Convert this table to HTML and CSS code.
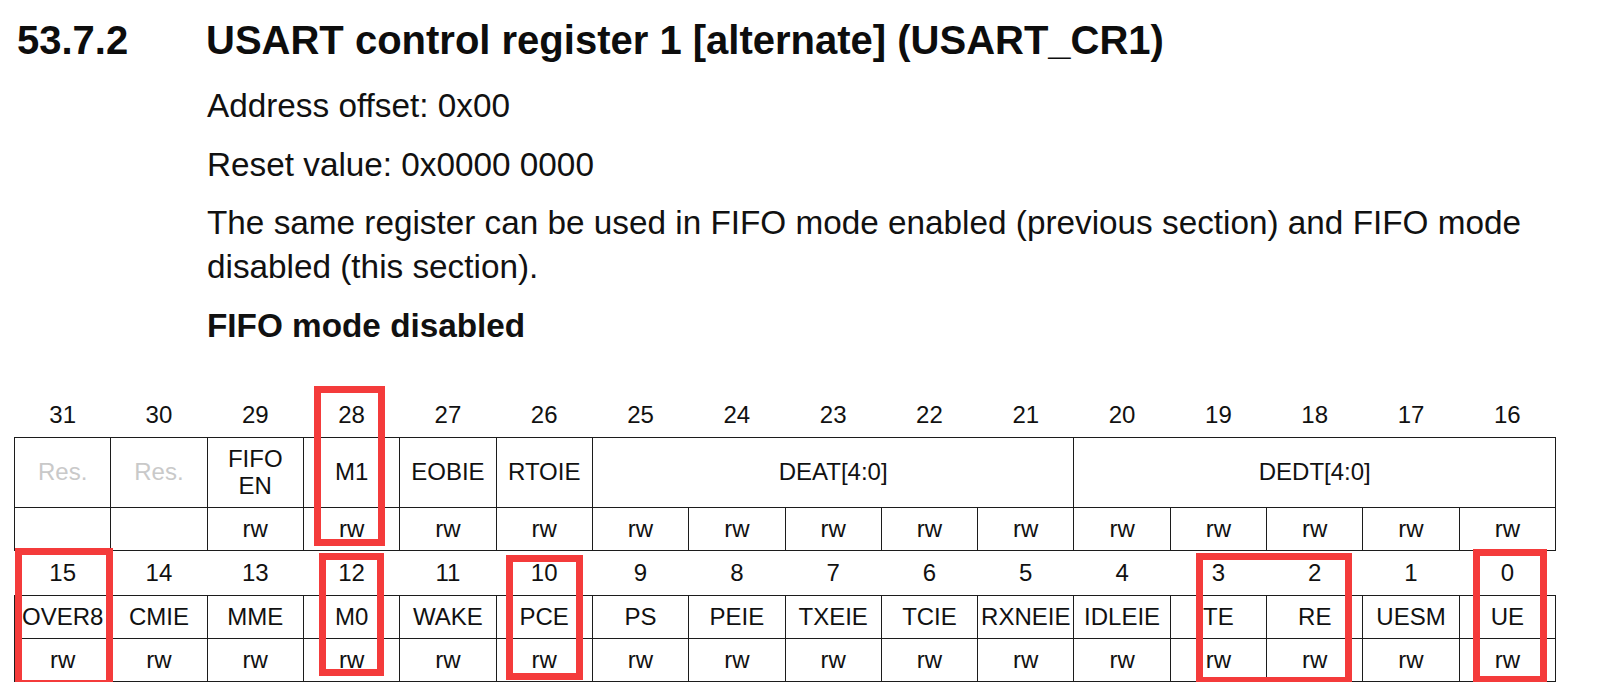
FILE: index.html
```html
<!DOCTYPE html>
<html lang="en">
<head>
<meta charset="utf-8">
<title>USART_CR1</title>
<link rel="stylesheet" href="styles.css">
</head>
<body>
<div class="page">
  <h2 class="sec-title"><span class="sec-num">53.7.2</span><span class="sec-name">USART control register 1 [alternate] (USART_CR1)</span></h2>
  <div class="content">
    <p class="para">Address offset: 0x00</p>
    <p class="para">Reset value: 0x0000 0000</p>
    <p class="para">The same register can be used in FIFO mode enabled (previous section) and FIFO mode disabled (this section).</p>
    <p class="para sub">FIFO mode disabled</p>
  </div>
  <div class="reg">
    <table class="regtable">
      <colgroup>
        <col><col><col><col><col><col><col><col><col><col><col><col><col><col><col><col>
      </colgroup>
      <tr class="bits">
        <td>31</td><td>30</td><td>29</td><td>28</td><td>27</td><td>26</td><td>25</td><td>24</td><td>23</td><td>22</td><td>21</td><td>20</td><td>19</td><td>18</td><td>17</td><td>16</td>
      </tr>
      <tr class="names tall">
        <td class="res">Res.</td><td class="res">Res.</td><td class="two">FIFO<br>EN</td><td>M1</td><td>EOBIE</td><td>RTOIE</td><td colspan="5">DEAT[4:0]</td><td colspan="5">DEDT[4:0]</td>
      </tr>
      <tr class="acc">
        <td></td><td></td><td>rw</td><td>rw</td><td>rw</td><td>rw</td><td>rw</td><td>rw</td><td>rw</td><td>rw</td><td>rw</td><td>rw</td><td>rw</td><td>rw</td><td>rw</td><td>rw</td>
      </tr>
      <tr class="bits">
        <td>15</td><td>14</td><td>13</td><td>12</td><td>11</td><td>10</td><td>9</td><td>8</td><td>7</td><td>6</td><td>5</td><td>4</td><td>3</td><td>2</td><td>1</td><td>0</td>
      </tr>
      <tr class="names">
        <td>OVER8</td><td>CMIE</td><td>MME</td><td>M0</td><td>WAKE</td><td>PCE</td><td>PS</td><td>PEIE</td><td>TXEIE</td><td>TCIE</td><td>RXNEIE</td><td>IDLEIE</td><td>TE</td><td>RE</td><td>UESM</td><td>UE</td>
      </tr>
      <tr class="acc">
        <td>rw</td><td>rw</td><td>rw</td><td>rw</td><td>rw</td><td>rw</td><td>rw</td><td>rw</td><td>rw</td><td>rw</td><td>rw</td><td>rw</td><td>rw</td><td>rw</td><td>rw</td><td>rw</td>
      </tr>
    </table>
    <div class="mark m28"></div>
    <div class="mark m15"></div>
    <div class="mark m12"></div>
    <div class="mark m10"></div>
    <div class="mark m32"></div>
    <div class="mark m0"></div>
  </div>
</div>
</body>
</html>
```

FILE: styles.css
```css
html, body {
  margin: 0;
  padding: 0;
  background: #ffffff;
}

body {
  font-family: "Liberation Sans", Arial, sans-serif;
  color: #111111;
  overflow: hidden;
}

.page {
  padding-top: 16px;
}

.sec-title {
  display: flex;
  margin: 0;
  font-size: 40px;
  line-height: 48px;
  font-weight: 700;
  color: #0d0d0d;
}

.sec-num {
  box-sizing: border-box;
  width: 206px;
  padding-left: 17px;
  flex: none;
}

.content {
  padding-left: 207px;
  padding-right: 60px;
  margin-top: 20px;
}

.para {
  margin: 0 0 14.5px 0;
  font-size: 33.3px;
  line-height: 44px;
}

.para.sub {
  font-weight: 700;
  margin-bottom: 0;
}

.reg {
  position: relative;
  margin-left: 14px;
  margin-top: 45px;
  width: 1542px;
}

.regtable {
  width: 1542px;
  table-layout: fixed;
  border-collapse: collapse;
  font-size: 24px;
  color: #111111;
}

.regtable td {
  padding: 0;
  text-align: center;
  vertical-align: middle;
  white-space: nowrap;
  line-height: 26px;
}

.regtable .bits td {
  height: 44px;
  border: none;
}

.regtable .names td,
.regtable .acc td {
  border: 1px solid #1c1c1c;
}

.regtable .names td {
  height: 42px;
}

.regtable .names.tall td {
  height: 69px;
}

.regtable .acc td {
  height: 42px;
}

.regtable .res {
  color: #c9c9c9;
}

.regtable .two {
  line-height: 27px;
}

.mark {
  position: absolute;
  box-sizing: border-box;
  border: 7px solid #f43b3b;
}

.m28 { left: 300px; top: -7px; width: 71px; height: 160px; }
.m15 { left: 1px; top: 155px; width: 98px; height: 139px; }
.m12 { left: 305px; top: 160px; width: 65px; height: 123px; }
.m10 { left: 492px; top: 162px; width: 77px; height: 125px; }
.m32 { left: 1182px; top: 160px; width: 156px; height: 131px; }
.m0  { left: 1459px; top: 156px; width: 74px; height: 134px; }
```
